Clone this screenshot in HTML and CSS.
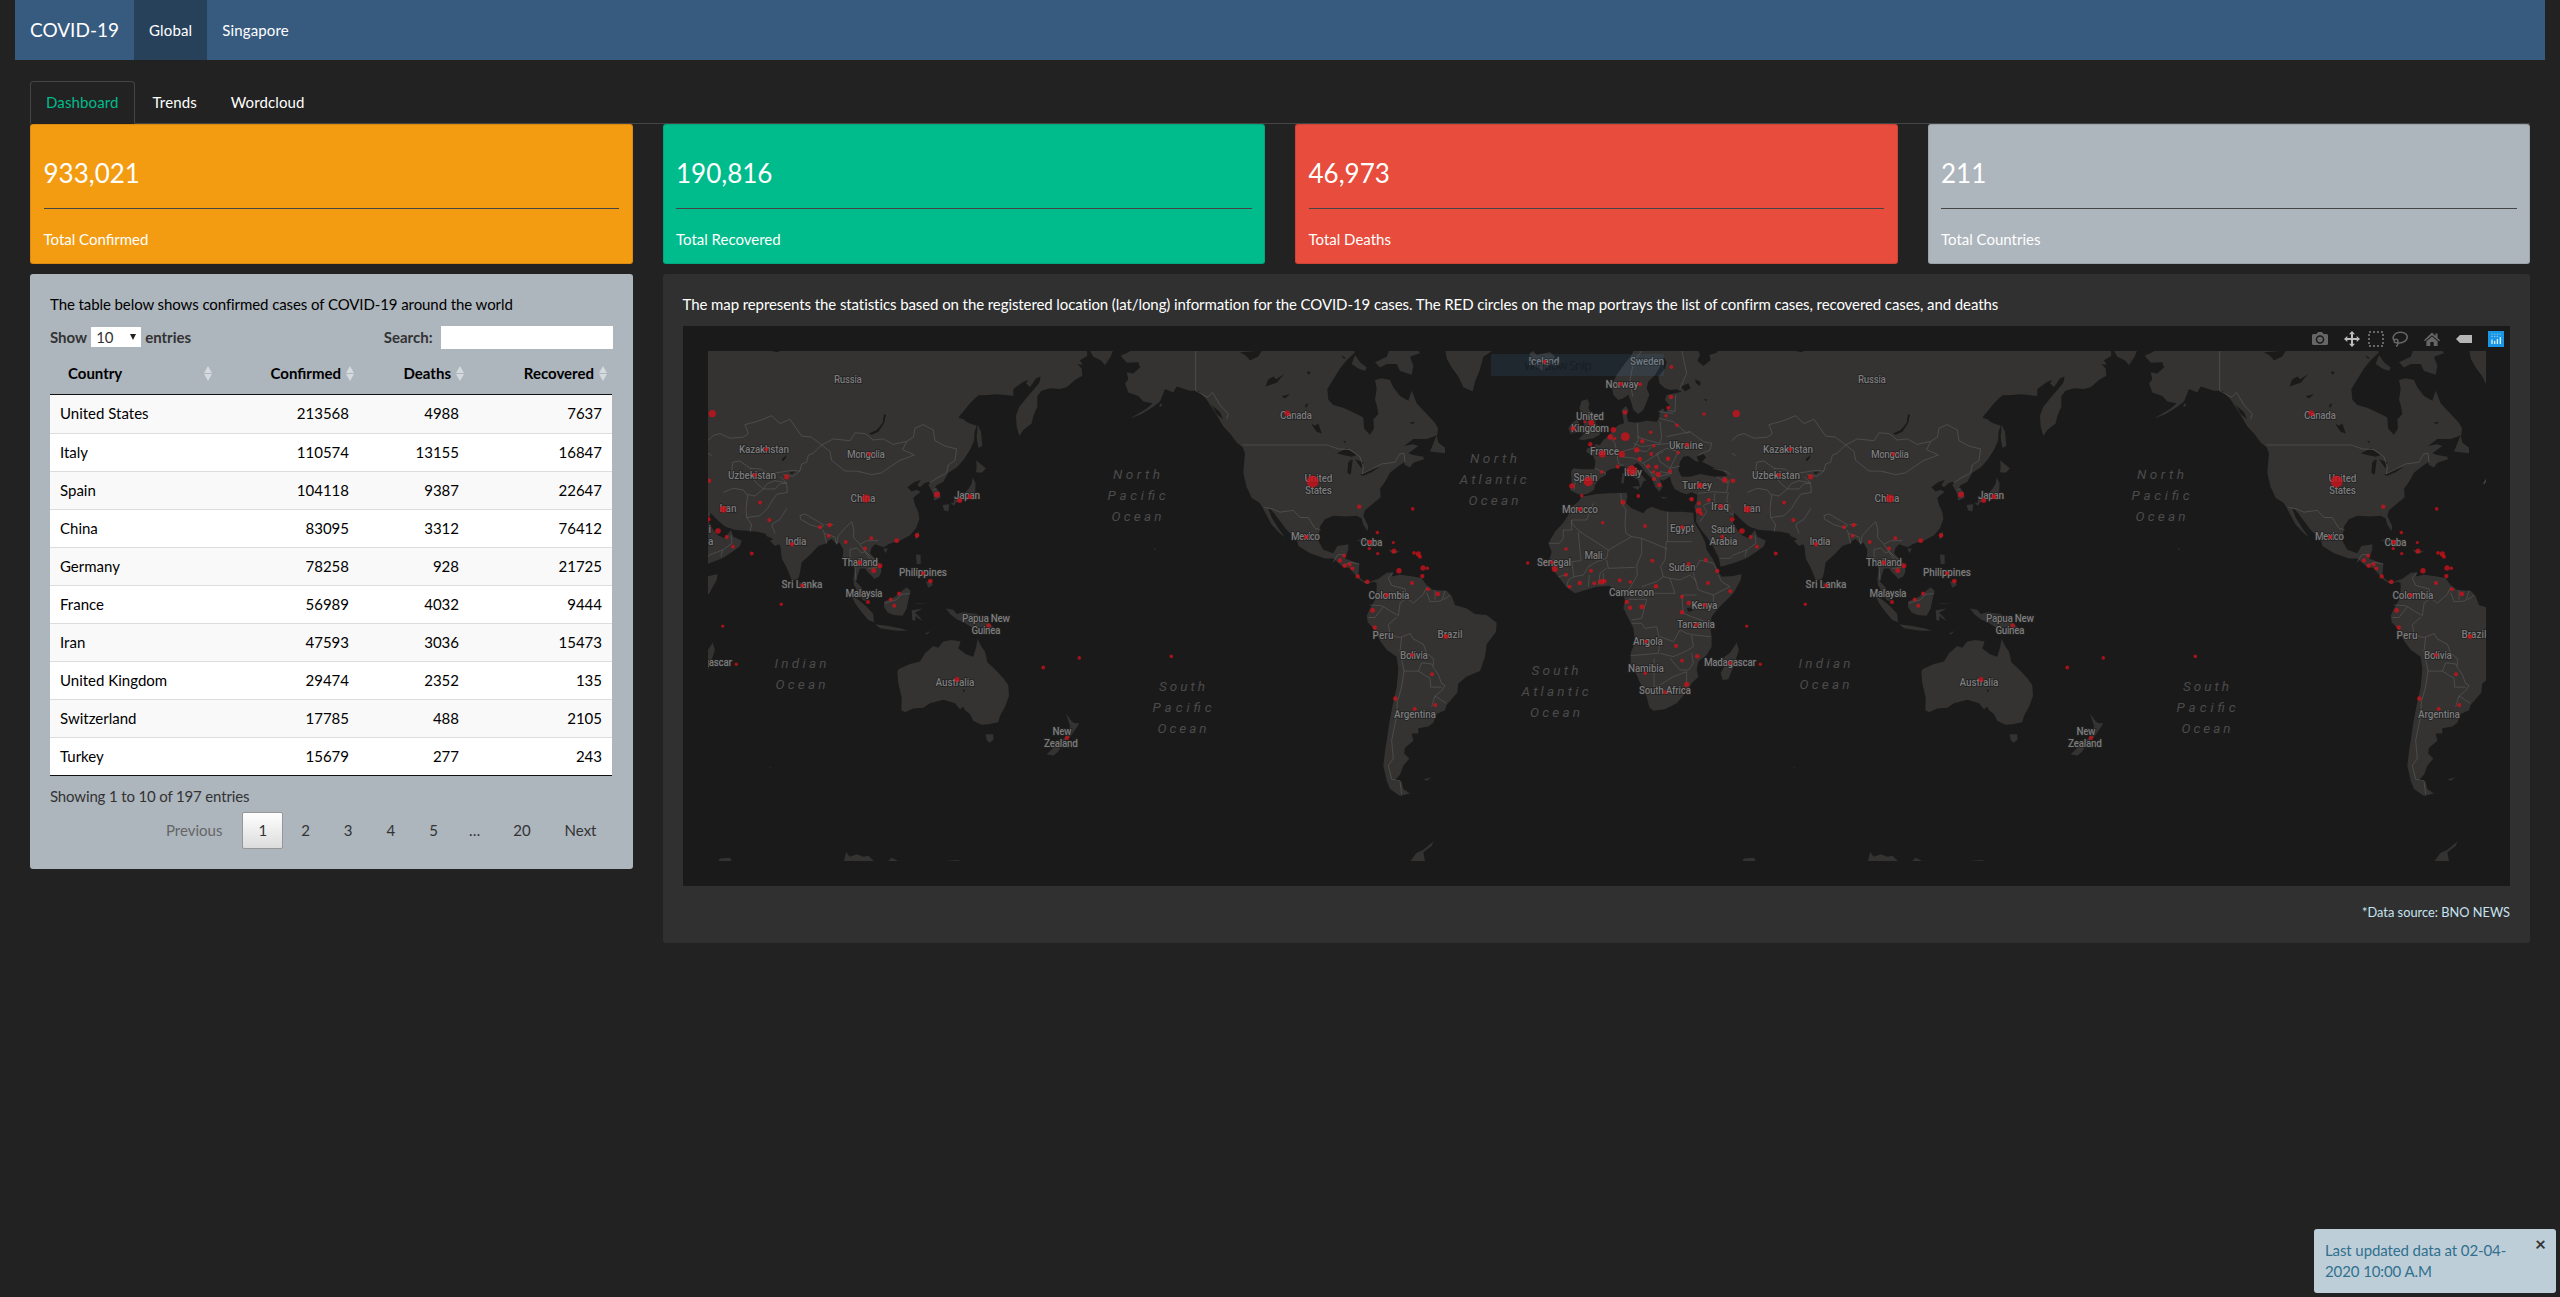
FILE: index.html
```html
<!DOCTYPE html>
<html lang="en">
<head>
<meta charset="utf-8">
<title>COVID-19</title>
<link rel="stylesheet" href="styles.css">
</head>
<body>
<nav class="navbar">
  <a class="brand">COVID-19</a>
  <a class="nav-link active">Global</a>
  <a class="nav-link">Singapore</a>
</nav>
<main class="container">
  <div class="tabs">
    <a class="tab active">Dashboard</a>
    <a class="tab">Trends</a>
    <a class="tab">Wordcloud</a>
  </div>
  <section class="stats">
    <div class="stat orange"><h3>933,021</h3><hr><p>Total Confirmed</p></div>
    <div class="stat green"><h3>190,816</h3><hr><p>Total Recovered</p></div>
    <div class="stat red"><h3>46,973</h3><hr><p>Total Deaths</p></div>
    <div class="stat grey"><h3>211</h3><hr><p>Total Countries</p></div>
  </section>
  <section class="panels">
    <div class="panel table-panel">
      <p class="intro">The table below shows confirmed cases of COVID-19 around the world</p>
      <div class="controls">
        <label class="length">Show <span class="select">10<i></i></span> entries</label>
        <label class="search">Search: <input type="text"></label>
      </div>
      <table class="cases">
        <colgroup><col class="c1"><col class="c2"><col class="c3"><col class="c4"></colgroup>
        <thead><tr><th class="name">Country<i class="sort"></i></th><th>Confirmed<i class="sort"></i></th><th>Deaths<i class="sort"></i></th><th>Recovered<i class="sort"></i></th></tr></thead>
        <tbody>
          <tr><td>United States</td><td>213568</td><td>4988</td><td>7637</td></tr>
          <tr><td>Italy</td><td>110574</td><td>13155</td><td>16847</td></tr>
          <tr><td>Spain</td><td>104118</td><td>9387</td><td>22647</td></tr>
          <tr><td>China</td><td>83095</td><td>3312</td><td>76412</td></tr>
          <tr><td>Germany</td><td>78258</td><td>928</td><td>21725</td></tr>
          <tr><td>France</td><td>56989</td><td>4032</td><td>9444</td></tr>
          <tr><td>Iran</td><td>47593</td><td>3036</td><td>15473</td></tr>
          <tr><td>United Kingdom</td><td>29474</td><td>2352</td><td>135</td></tr>
          <tr><td>Switzerland</td><td>17785</td><td>488</td><td>2105</td></tr>
          <tr><td>Turkey</td><td>15679</td><td>277</td><td>243</td></tr>
        </tbody>
      </table>
      <p class="info">Showing 1 to 10 of 197 entries</p>
      <div class="pager">
        <a class="page disabled">Previous</a>
        <a class="page current">1</a><a class="page">2</a><a class="page">3</a><a class="page">4</a><a class="page">5</a>
        <span class="ellipsis">…</span>
        <a class="page">20</a><a class="page">Next</a>
      </div>
    </div>
    <div class="panel map-panel">
      <p class="intro">The map represents the statistics based on the registered location (lat/long) information for the COVID-19 cases. The RED circles on the map portrays the list of confirm cases, recovered cases, and deaths</p>
      <div class="map">
        <svg class="canvas" width="1827" height="560" viewBox="683 326 1827 560">
          <defs>
            <clipPath id="view"><rect x="708" y="351" width="1778" height="510"/></clipPath>
            <g id="world">
              <g class="land">
                <g transform="translate(680 330) scale(.33333 .35714)">
                  <path d="M84 50H1220L1222 72 1200 85 1208 98 1192 95 1205 108 1207 128 1185 140 1160 160 1140 165 1110 163 1085 170 1072 185 1072 215 1060 240 1055 262 1030 280 1018 297 1010 270 1008 240 1018 215 1040 190 1060 168 1078 148 1082 130 1068 135 1050 160 1038 150 1045 140 1030 145 1000 165 1000 185 975 182 950 180 925 182 895 183 870 205 850 228 835 245 850 250 862 258 870 262 890 268 884 285 882 310 870 335 850 365 830 385 805 400 790 425 770 435 765 442 778 452 782 470 762 478 760 460 752 445 745 435 750 425 735 428 720 440 712 435 722 420 705 425 690 435 682 440 695 452 710 447 722 453 700 470 705 490 715 510 718 530 708 555 690 575 660 590 640 595 625 600 612 608 600 605 585 600 575 610 570 625 585 640 600 655 605 675 598 690 583 697 575 688 565 680 555 668 540 668 532 690 528 705 545 720 552 745 560 760 548 755 535 735 522 715 520 695 525 670 520 645 505 640 488 635 490 615 478 595 470 600 455 585 445 590 438 598 415 605 395 625 365 650 360 680 355 695 343 700 335 700 320 665 305 640 302 610 298 600 285 605 270 590 280 585 262 578 255 570 230 565 200 562 165 560 135 550 115 535 100 520 88 510 80 505V50Z"/>
                  <path d="M893 265L903 285 907 325 895 330 890 300ZM888 365L918 388 905 400 888 398 890 380ZM878 412L887 430 885 455 870 470 845 478 820 485 822 475 845 465 865 445 875 430ZM788 490L808 488 805 508 792 505ZM812 485L828 483 822 492ZM715 565L718 575 708 588 705 575ZM610 612L624 612 616 625ZM708 628L722 630 722 655 710 655ZM738 705L755 700 758 715 745 722ZM612 760L640 750 660 735 680 720 692 730 685 755 680 780 668 800 640 798 622 790 612 775ZM515 745L535 755 560 775 580 795 582 818 565 812 545 790 525 765ZM585 824L620 828 660 835 685 842 650 842 600 835ZM695 785L728 780 705 792 715 800 728 815 715 808 708 800 705 815 697 812ZM735 850L752 843 740 853ZM798 780L820 783 830 795 850 790 890 795 920 815 950 840 965 850 935 845 915 832 880 835 850 818 830 810 810 795ZM358 705L368 712 365 722 357 718ZM710 766L745 765 710 768ZM1422 612L1427 612 1425 618ZM268 1224L275 1226 270 1228Z"/>
                  <path d="M652 960L655 950 690 935 720 928 735 905 760 885 775 890 790 872 815 868 842 872 835 892 858 908 880 915 888 890 893 865 903 885 915 900 922 930 945 950 970 975 985 995 987 1025 975 1055 960 1080 955 1098 925 1104 905 1105 880 1095 870 1075 855 1065 850 1055 840 1062 825 1045 790 1035 750 1045 730 1058 700 1060 675 1070 664 1065 665 1030 655 990ZM917 1132L940 1132 940 1148 928 1156 920 1148ZM1158 1073L1170 1090 1180 1100 1198 1102 1185 1120 1170 1140 1155 1150 1135 1180 1120 1192 1100 1188 1120 1170 1145 1150 1165 1130 1170 1110Z"/>
                  <path d="M115 1487L120 1480 150 1478 155 1487ZM492 1487L498 1462 510 1475 530 1468 550 1475 565 1472 582 1487ZM624 1487L635 1478 655 1487ZM790 1487L838 1484V1487Z"/>
                  <path d="M1228 55H1300L1292 75 1275 98 1262 85 1240 75ZM1322 72L1345 62 1370 50H1565V170L1530 170 1490 158 1480 175 1455 165 1440 200 1420 215 1385 235 1350 248 1400 220 1418 205 1390 200 1375 185 1345 175 1335 150 1345 138 1340 118 1360 122 1380 105 1375 90 1340 92ZM1440 205L1448 210 1438 217Z"/>
                </g>
                <g transform="translate(1200 330) scale(.33333 .35714)">
                  <path d="M-12 50H450L465 62 440 85 420 108 405 130 382 165 385 195 400 210 430 218 470 235 490 245 492 275 510 293 522 275 520 250 535 235 530 210 525 195 530 165 525 140 545 135 570 140 580 160 600 185 625 198 635 170 650 205 675 230 705 260 714 275 712 295 680 305 640 305 612 325 640 320 655 325 625 345 640 350 670 355 672 362 640 372 630 385 615 378 612 370 590 385 570 400 555 425 540 445 542 468 520 485 495 505 490 520 505 550 502 563 490 545 485 528 470 520 440 522 400 520 375 530 360 550 355 590 370 615 400 625 412 605 445 600 445 615 435 640 465 650 478 655 475 690 490 702 510 705 530 698 535 710 520 705 500 712 480 700 465 685 450 668 425 660 400 640 375 640 330 625 295 605 290 585 260 560 240 535 215 505 205 500 215 525 235 555 255 580 240 570 215 545 195 510 180 485 155 470 140 440 130 400 135 345 128 328 110 315 90 290 70 270 45 230 20 195 -5 170 -12 170Z"/>
                  <path d="M690 340L710 295 715 315 735 330 735 345ZM525 90L560 75 570 50 650 50 660 65 630 75 640 100 635 125 600 115 590 95 560 95 540 105ZM455 95L465 70 480 90 500 105 495 115 475 108ZM735 50H890L850 75 840 110 825 145 818 172 790 160 775 130 755 105 740 80ZM470 588L500 585 550 605 520 603ZM565 615L600 620 580 628Z"/>
                  <path d="M530 700L560 680 580 678 575 690 600 685 640 690 665 695 680 715 700 728 740 730 755 745 765 770 800 780 825 795 860 798 890 820 888 845 860 880 855 915 840 955 800 970 775 990 772 1015 740 1050 735 1065 710 1075 700 1100 685 1110 655 1115 655 1130 635 1130 640 1150 615 1170 612 1185 628 1200 610 1220 600 1245 585 1260 605 1265 610 1285 630 1298 600 1305 570 1285 560 1262 550 1220 555 1180 560 1150 568 1100 578 1050 590 1000 595 950 590 915 560 895 540 870 520 835 503 818 500 800 510 780 525 755 530 725ZM672 1258L695 1252 680 1262ZM632 1487L648 1465 670 1455 700 1432 695 1445 670 1462 675 1487Z"/>
                </g>
                <g transform="translate(1500 330) scale(.33333)">
                  <path d="M497 50H590L600 75 592 92 610 108 632 90 628 75 650 68 665 50H702V560L690 560 600 575 588 550 583 530 590 515 592 495 575 487 560 493 545 488 525 478 515 460 510 440 490 452 480 448 488 470 478 485 465 470 455 445 435 425 420 405 412 398 400 405 402 412 412 425 430 440 440 452 432 452 425 465 422 475 415 450 395 438 380 420 372 408 360 410 345 415 330 418 318 425 318 435 300 445 285 465 282 480 262 492 243 495 225 488 210 480 215 455 213 425 220 415 250 418 283 417 286 395 280 378 258 365 262 355 283 352 285 342 300 345 310 330 325 318 340 300 355 285 372 280 368 255 365 240 378 228 385 240 380 258 385 275 410 278 440 272 470 275 478 262 480 240 490 235 495 245 510 240 508 225 495 210 500 195 525 190 545 185 530 178 510 180 495 175 478 160 475 140 495 115 500 95 490 80Z"/>
                  <path d="M405 50L395 75 375 100 350 135 335 165 340 195 355 210 370 205 385 195 393 215 400 240 415 252 430 240 440 215 448 195 440 175 445 155 465 135 480 110 490 85 500 50ZM245 212L262 208 268 220 265 235 275 250 285 270 290 285 305 295 298 315 280 325 250 330 235 328 252 312 240 305 250 290 255 270 245 255 238 235ZM215 280L232 268 240 285 235 305 212 312 205 295ZM88 70L100 63 110 75 150 66 165 80 155 100 128 122 100 105ZM367 430L374 430 372 460 364 460ZM395 470L420 468 415 480ZM482 500L505 503 490 506ZM565 505L580 500 574 512Z"/>
                  <path d="M245 500L290 492 330 490 380 488 382 500 378 520 395 535 430 550 440 538 455 530 480 540 505 545 545 545 580 548 582 575 600 605 615 635 620 660 640 690 655 725 665 740 700 738 725 732 722 750 700 790 670 820 650 840 635 860 630 885 635 920 635 950 620 975 595 995 590 1020 595 1040 575 1060 560 1085 530 1120 495 1138 460 1142 448 1132 440 1100 425 1070 410 1035 392 1000 392 970 405 935 400 895 385 865 370 835 375 812 370 795 345 785 330 768 290 770 225 790 200 772 175 740 155 715 148 690 155 665 145 640 165 605 190 578 205 555 215 530 235 515ZM710 938L717 960 700 1010 685 1048 668 1050 662 1030 672 1010 668 985 690 968Z"/>
                  <path d="M590 545L640 545 690 560 700 580 712 600 725 615 745 625 765 600 772 620 798 632 790 650 765 668 740 685 700 700 662 710 655 680 640 650 620 620 600 595 588 575Z"/>
                </g>
              </g>
              <g class="water">
                <path transform="translate(680 330) scale(.33333 .35714)" d="M567 290L590 280 608 260 612 235 618 238 612 262 595 285 575 293ZM305 362L320 350 318 358 308 368ZM328 398L345 396 335 404ZM275 59L300 59 292 62ZM848 1005L856 1010 850 1014Z"/>
                <path transform="translate(1200 330) scale(.33333 .35714)" d="M410 345L440 332 470 350 455 355 430 350ZM445 370L455 362 458 365 452 405 442 400ZM465 362L490 370 485 388 475 375ZM480 405L515 390 540 382 515 398 490 408ZM120 62L185 58 175 74 150 85 138 72ZM196 158L205 138 220 130 228 138 252 124 230 148ZM245 185L270 180 255 192ZM333 262L345 268 355 262 365 290 350 285ZM315 210L325 205 318 220ZM320 115L332 118 326 126ZM628 260L645 256 638 264ZM430 310L438 312 436 318ZM35 210L58 228 70 250 50 235ZM425 70L438 80 430 80Z"/>
                <path transform="translate(1500 330) scale(.33333)" d="M700 392L720 375 757 376 757 388 735 392 724 402 735 420 748 428 744 445 756 460 752 488 728 490 712 478 714 455 698 425 692 405ZM540 395L550 380 565 378 585 392 597 397 590 380 610 372 618 382 606 395 640 412 670 422 682 438 645 440 600 432 570 440 545 440 535 420ZM543 170L565 160 572 175 555 184ZM585 148L602 155 600 168 588 160ZM612 208L622 208 618 214ZM560 835L575 832 578 842 565 845ZM592 545L600 550 606 562 594 552Z"/>
              </g>
              <g class="borders">
                <path transform="translate(680 330) scale(.33333 .35714)" d="M84 310L100 295 120 290 150 303 190 300 205 290 195 265 235 255 275 240 300 262 330 250 365 297 395 300 425 322 400 345 385 350 380 370 365 375 360 395 340 410 310 405M425 322L460 305 510 310 525 288 555 290 580 308 610 305 640 320 680 312 668 335 703 350 660 365 635 380 605 400 575 405 530 395 495 395 455 365 450 340 425 322M680 312L700 300 705 275 730 265 760 280 765 310 795 325 830 333 825 365 805 378 800 400 770 415 750 428M760 447L772 445M155 405L158 370 180 367 210 387 245 390 260 400 290 400 335 393 360 395M210 387L225 425 250 445 262 430 285 422 320 428 300 410M130 455L160 443 190 448 200 460 225 465 250 445 285 445 300 430 320 430 322 455 290 460 275 480 262 500 240 520 200 525 198 500 203 462M200 525L215 545 210 565M320 500L300 530 275 545 285 570M360 520L375 515 430 545 425 555 390 545 362 530ZM435 545L460 545M430 560L440 598M435 570L465 580 470 600 475 575 500 550 515 537 522 560 520 580 540 600 560 590 595 590M510 615L530 610 545 625 555 620 575 650 590 655 590 665 565 668M510 615L510 635 525 665 528 700M540 600L550 615 590 650M615 765L650 755 665 740 690 738M84 345L95 352"/>
                <path transform="translate(1200 330) scale(.33333 .35714)" d="M-13 50V170L22 188 38 175 60 210 85 235 80 250M128 322H382L415 333 450 335 480 355 490 385 487 403 515 390 545 375 585 370 598 348 612 345 615 370M193 497L215 500 240 510 280 505 300 525 325 525 345 555 362 560M400 650L412 630 432 628M430 660L450 650 478 655M578 680L565 695 575 715 615 725 620 750 600 765 595 800M620 750L640 765 670 740 680 720M680 735L690 760 715 760 740 750 750 742M705 728V755M735 730L728 752M510 770L545 772 595 800M505 805L525 805 550 775M590 805L565 825 570 850 590 860 605 860 630 850 640 865 670 880 680 905 700 920 700 940M605 860L600 900 608 935 612 955 655 955 665 932 695 935 700 945 715 965 725 990 735 995 725 1010 705 1025 738 1045M655 955L690 975 692 1000 725 1000M705 1025L695 1055M612 955L605 1000 592 1040 590 1080 575 1150 580 1200 565 1220 575 1258 600 1262 605 1300"/>
                <path transform="translate(1500 330) scale(.33333)" d="M362 490L365 520 378 540 375 580 378 610 395 620 425 625 498 655M503 545V635H575M498 660V635H503M395 620L325 660 240 605 215 580V570H260L280 520M215 570V600H190V625L178 640H148M240 605L235 610 243 692 215 695M325 660L320 685 290 695 265 710 250 735 222 740 215 695 155 690M425 625L425 670 410 705 412 735 395 765 385 780M320 690L325 715 405 712M498 655L495 690 482 710 490 740 470 755 425 770M490 740L510 745 540 750 570 735 590 755M600 690L640 700 655 725M600 690L580 730 595 780 640 795 690 770 665 755 655 735M640 795V840M545 795H590M545 795L550 850 575 860 630 880M510 745L525 790H455L425 800M385 808H440L425 865 395 870M395 880H425L435 895 470 890 480 935 475 970 392 977M480 920L520 935 540 900 560 910 585 915 632 920M480 970L520 980 555 965 580 950 575 915M462 985V1070L480 1065 520 1040 560 1025V1060M510 985L540 1020 565 1020 580 1000 575 970M175 740L200 735M200 772L205 750 222 740M265 770L268 735M295 765L300 730 320 715M310 730V765M595 490L640 485 680 488 685 460 665 450 650 440M645 488L642 515 610 525M642 515L665 535 700 555M600 575L620 545 610 528M685 488L680 510 700 548M660 685L690 685 700 675 740 660 768 640 765 615M740 660L735 680"/>
                <path transform="translate(1500 330) scale(.33333)" d="M330 320L345 340 350 365 355 400 372 408M285 415L318 430M228 440L222 480M412 278L415 330 400 355 365 365M412 320L440 330 480 340 485 320 480 275M400 340L425 350 460 345 510 340 530 360M478 265L520 275 560 310 570 305 610 335 635 340 630 360 595 375M500 320L570 305M475 245L520 250M500 240L525 245 527 195M545 60L560 130 540 175M398 200L390 150 400 100 425 62M480 395L510 415 540 408M510 415L535 365 500 355 470 370 480 395M365 380L405 385 430 400 460 380 490 365M430 400L450 425 475 440 515 430 480 425M405 360L440 365 455 350M640 415L680 425 700 440 680 460M670 440L690 460M450 425L470 455"/>
              </g>
            </g>
          </defs>
          <g clip-path="url(#view)">
            <use href="#world" x="-1024"/><use href="#world"/><use href="#world" x="1024"/>
            <g id="labels"></g>
            <rect class="snip" x="1491" y="354" width="173" height="22"/>
            <text class="snip-text" x="1524" y="369.500" textLength="68">Window Snip</text>
            <g id="cases"></g>
          </g>
        </svg>
        <div class="modebar">
          <svg class="tool camera" viewBox="0 0 16 16"><path fill-rule="evenodd" d="M1.500 3H4.500L6 1H10L11.500 3H14.500Q16 3 16 4.500V12.500Q16 14 14.500 14H1.500Q0 14 0 12.500V4.500Q0 3 1.500 3ZM8 4.200A4.300 4.300 0 1 0 8 12.800 4.300 4.300 0 1 0 8 4.200ZM8 5.700A2.800 2.800 0 1 1 8 11.300 2.800 2.800 0 1 1 8 5.700Z"/></svg>
          <svg class="tool pan" viewBox="0 0 16 16"><path d="M8 0L11 3.300H9V7H12.700V5L16 8 12.700 11V9H9V12.700H11L8 16 5 12.700H7V9H3.300V11L0 8 3.300 5V7H7V3.300H5Z"/></svg>
          <svg class="tool box" viewBox="0 0 16 16"><rect x="1" y="1" width="14" height="14" fill="none" stroke="currentColor" stroke-width="2" stroke-dasharray="2 2"/></svg>
          <svg class="tool lasso" viewBox="0 0 16 16"><path fill="none" stroke="currentColor" stroke-width="1.500" d="M3 10C-1 7 2 1.500 8.500 1.200 14 1 16.500 5 14.500 8.500 12.500 11.500 8 12.500 4.800 11.500M4.500 8.200A2 1.800 0 1 0 4.600 11.700 2 1.800 0 0 0 4.500 8.200M5.500 11.500Q6.500 14 4 15.500"/></svg>
          <svg class="tool home" viewBox="0 0 16 16"><path d="M8 1.500L11.500 5V2.500H13.500V7L16 9.200 15 10.300 8 4.200 1 10.300 0 9.200ZM8 5.500L13.600 10.300V15H9.700V11H6.300V15H2.400V10.300Z"/></svg>
          <svg class="tool tag" viewBox="0 0 16 16"><path d="M0 8L4 4H16V12H4Z"/></svg>
          <svg class="tool logo" viewBox="0 0 16 16"><rect width="16" height="16" fill="#1b96e5"/><path stroke="#d9f1ff" stroke-width="1.300" d="M4 8.500V13M6.700 10V13M9.400 8V13M12.300 6V13"/><path stroke="#8dd0f7" stroke-dasharray="1.200 1.500" d="M3.400 3.200H13M3.400 5.500H11"/></svg>
        </div>
      </div>
      <p class="source">*Data source: BNO NEWS</p>
    </div>
  </section>
</main>
<aside class="toast"><span>Last updated data at 02-04-2020 10:00 A.M</span><b>×</b></aside>
<script src="map.js"></script>
</body>
</html>
```
FILE: styles.css
```css
* { box-sizing: border-box; }
body { margin: 0; background: #222; color: #fff; font: 15px/1.42857 Lato, sans-serif; min-height: 1297px; overflow: hidden; }
p, h3 { margin: 0; font-weight: 400; }
.navbar { display: flex; height: 60px; margin: 0 15px; background: #375a7f; line-height: 60px; }
.brand { padding: 0 15px; font-size: 19px; }
.nav-link { padding: 0 15px; letter-spacing: .15px; }
.nav-link.active { background: #28415b; }
.container { padding: 21px 30px 0; }
.tabs { display: flex; gap: 2px; height: 43px; border-bottom: 1px solid #464545; letter-spacing: .12px; }
.tab { height: 43px; padding: 10px 15px; border: 1px solid transparent; border-radius: 4px 4px 0 0; }
.tab.active { color: #00bc8c; border-color: #464545; border-bottom-color: #222; }
.stats { display: grid; grid-template-columns: repeat(4, 1fr); gap: 30px; }
.stat { height: 140px; padding: 0 12.5px; border-radius: 3px; border: 1px solid rgba(0,0,0,.1); }
.stat h3 { padding-top: 33px; font-size: 26px; line-height: 30px; }
.stat hr { height: 1px; margin: 20px 0 20px; border: 0; background: #464545; }
.orange { background: #f39c12; }
.green { background: #00bc8c; }
.red { background: #e74c3c; }
.grey { background: #adb5bd; }
.panels { display: grid; grid-template-columns: 602.5px 1fr; gap: 30px; align-items: start; margin-top: 10px; }
.panel { padding: 19px 20px; border-radius: 3px; }
.table-panel { height: 595px; background: #adb5bd; color: #000; }
.intro { height: 33px; line-height: 22px; letter-spacing: -.085px; white-space: nowrap; }
.controls { display: flex; justify-content: space-between; align-items: center; height: 23px; color: #333; font-weight: 700; }
.length { display: flex; align-items: center; gap: 4px; }
.select { display: flex; align-items: center; justify-content: space-between; width: 50px; height: 20px; padding: 0 5px; background: #fff; font-weight: 400; }
.select i { border: 3px solid transparent; border-top: 6px solid #222; border-bottom: 0; }
.search { display: flex; align-items: center; gap: 8px; }
.search input { width: 172px; height: 23px; border: 0; padding: 0; background: #fff; }
.cases { width: 562px; margin-top: 5px; table-layout: fixed; border-collapse: separate; border-spacing: 0; border-bottom: 1px solid #111; }
.c1 { width: 169px; } .c2 { width: 140px; } .c3 { width: 110px; } .c4 { width: 143px; }
.cases th { position: relative; height: 41px; padding: 0 18px 1px; border-bottom: 1px solid #111; text-align: right; font-weight: 700; }
.cases th.name { text-align: left; }
.sort { position: absolute; right: 5px; top: 12px; width: 8px; height: 15px; background: linear-gradient(#adb5bd,#adb5bd) 0 7px/8px 1px no-repeat, #d5dade; clip-path: polygon(50% 0, 100% 46%, 100% 54%, 50% 100%, 0 54%, 0 46%); }
.name .sort { right: 7px; }
.cases td { height: 38px; padding: 0 10px; border-top: 1px solid #ddd; background: #fff; text-align: right; }
.cases tr:first-child td { border-top: 0; }
.cases tr:nth-child(odd) td { background: #f9f9f9; }
.cases td:first-child { text-align: left; }
.info { margin-top: 10px; line-height: 21px; color: #333; letter-spacing: -.15px; }
.pager { display: flex; justify-content: flex-end; gap: 2px; margin-top: 5px; color: #333; }
.page { height: 37px; padding: 7px 15px; border: 1px solid transparent; border-radius: 2px; }
.disabled { color: #666; padding-right: 17px; }
.current { border-color: #979797; background: linear-gradient(#fff, #dcdcdc); }
.ellipsis { padding: 8px 15px 8px 13px; }
.map-panel { height: 669px; background: #303030; }
.map { position: relative; height: 560px; background: #1a1a1a; }
.canvas { display: block; }
.source { padding-top: 15px; font-size: 12.8px; line-height: 22px; text-align: right; color: #c7e4f0; }
.land { fill: #343332; }
.water { fill: #1a1a1a; }
.borders { fill: none; stroke: #666; stroke-width: 1.8; stroke-linejoin: round; }
.borders path { opacity: .8; }
.country { font: 500 10px Roboto, sans-serif; fill: #7c7c7c; stroke: #222; stroke-width: 1.5px; paint-order: stroke; }
.ocean { font: italic 400 13.5px Roboto, sans-serif; fill: #4b4b4b; }
.case { fill: #d5101a; opacity: .75; }
.snip { fill: #4682b4; opacity: .14; }
.snip-text { font: 12.5px "Open Sans", sans-serif; fill: #151b20; opacity: .75; }
.modebar { position: absolute; top: 5px; right: 6px; display: flex; color: #666; }
.tool { width: 16px; height: 16px; margin-left: 8px; fill: currentColor; }
.pan { margin-left: 16px; color: #bdbdbd; }
.home { margin-left: 16px; }
.tag { margin-left: 16px; color: #b5b5b5; }
.logo { margin-left: 16px; }
.toast { position: absolute; right: 4px; bottom: 4px; display: flex; justify-content: space-between; width: 242px; height: 64px; padding: 11px 10px 0 11px; border-radius: 3px; background: #bdced8; color: #31708f; line-height: 21px; letter-spacing: -.1px; }
.toast span { width: 190px; }
.toast b { font-size: 19px; line-height: 8px; color: #333; }
```
FILE: map.js
```js
// One world copy is 1024px wide; features repeat across the view.
const COPIES = [-1024, 0, 1024];
const NS = 'http://www.w3.org/2000/svg';

// text, centre x, baseline y, width
const countries = [
  ['Russia', 848, 383, 28], ['Kazakhstan', 764, 453, 50], ['Mongolia', 866, 458, 38], ['Uzbekistan', 752, 479, 48],
  ['China', 863, 501.5, 25], ['Iran', 728, 511.5, 17], ['Japan', 967, 498.5, 26], ['India', 796, 545, 21],
  ['Thailand', 860, 566, 36], ['Philippines', 923, 576, 48], ['Sri Lanka', 802, 588, 41], ['Malaysia', 864, 597, 37],
  ['Papua New', 986, 622, 48], ['Guinea', 986, 634, 29], ['Australia', 955, 685.5, 39], ['New', 1062, 735, 19], ['Zealand', 1061, 747, 34],
  ['Canada', 1296, 418.5, 32], ['United', 1318.5, 481.5, 28], ['States', 1318.5, 493.5, 27], ['Mexico', 1305.5, 539.5, 29],
  ['Cuba', 1371.5, 546, 22], ['Colombia', 1389, 598.5, 41], ['Peru', 1383, 639, 21], ['Brazil', 1450, 637.5, 25],
  ['Bolivia', 1414, 658.5, 28], ['Argentina', 1415, 717.5, 42], ['Iceland', 1544, 364.5, 31], ['Sweden', 1647, 364.5, 34],
  ['Norway', 1622, 388, 33], ['United', 1590, 419.5, 28], ['Kingdom', 1590, 431.5, 38], ['France', 1604.5, 454.5, 29],
  ['Ukraine', 1686, 448.5, 34], ['Italy', 1633, 476, 18], ['Spain', 1585.5, 480.5, 24], ['Turkey', 1697, 489, 30],
  ['Morocco', 1580, 512.5, 36], ['Iraq', 1720, 510, 18], ['Egypt', 1682, 531.5, 24], ['Saudi', 1723, 533, 24],
  ['Arabia', 1723.5, 545, 28], ['Mali', 1593.5, 559, 18], ['Senegal', 1554, 565.5, 34], ['Sudan', 1682, 570.5, 27],
  ['Cameroon', 1631.5, 596, 45], ['Kenya', 1704.5, 608.5, 26], ['Tanzania', 1696, 627.5, 38], ['Angola', 1648, 644.5, 30],
  ['Madagascar', 1730, 666, 52], ['Namibia', 1646, 671.5, 36], ['South Africa', 1665, 694, 52]
];
const oceans = [
  ['Indian', 800.5, 668, 52], ['Ocean', 800.5, 689, 50],
  ['North', 1136.5, 479, 47], ['Pacific', 1136.5, 500, 58], ['Ocean', 1136.5, 521, 50],
  ['South', 1182, 691, 46], ['Pacific', 1182, 712, 59], ['Ocean', 1182, 733, 49],
  ['North', 1493.5, 463, 47], ['Atlantic', 1493, 484, 67], ['Ocean', 1493.5, 505, 50],
  ['South', 1555, 675, 47], ['Atlantic', 1555, 696, 67], ['Ocean', 1555, 717, 50]
];

// origin and unit of each survey sheet, then x, y, radius
const sheets = [
  [680, 330, 1 / 3, 1 / 2.8, [
    [259,334,2],[568,347,2],[224,406,2],[320,411,2.6],[558,472,4],[130,502,3.5],[240,483,2],[268,532,2],[771,461,3],
    [839,477,2.5],[870,467,2.5],[336,600,2.3],[420,552,2],[449,546,2.2],[446,576,2],[497,594,2],[574,583,2],[555,612,2],
    [650,590,2.4],[711,575,2.3],[540,651,2.2],[600,660,2.5],[581,673,2.5],[729,681,2],[751,703,2.4],[657,738,2],[632,755,2],
    [564,762,2],[643,772,2],[367,715,2],[215,626,2],[304,768,1.7],[128,829,1.7],[169,936,1.7],[926,827,2.2],[831,979,2.5],
    [1090,945,1.9],[1198,918,1.8],[1474,914,1.8],[1161,1142,2.2]]],
  [1200, 330, 1 / 3, 1 / 2.8, [
    [262,233,2.8],[338,424,6],[478,495,2.2],[318,580,2.2],[638,501,1.8],[532,567,1.8],[510,594,2.3],[508,612,1.7],[533,626,1.7],
    [580,595,1.6],[582,619,2.5],[642,624,1.8],[655,627,2.6],[660,635,2],[669,666,2.6],[682,667,1.8],[667,689,2.2],[597,674,2.7],
    [420,645,2.2],[433,632,2],[434,660,2.3],[449,656,2],[457,668,2],[473,690,2.2],[502,705,2.3],[636,708,2],[684,726,2],
    [713,739,2.4],[560,742,2.2],[518,785,2.4],[524,833,2.2],[738,858,2.5],[636,910,2],[696,964,2],[586,1032,2.3],[706,1050,2],[644,1061,2]]],
  [1500, 330, 1 / 3, 1 / 3, [
    [134,95,2],[514,111,2],[362,162,2.3],[420,163,2],[513,201,2.2],[505,233,2],[498,257,1.8],[375,247,2.4],[274,278,3],[254,275,1.5],
    [219,296,2.4],[271,343,2.2],[307,372,3.6],[376,320,4.4],[340,299,2.8],[331,321,2.8],[344,326,1.7],[452,307,1.8],[531,286,1.8],
    [612,252,1.8],[709,251,3.6],[365,373,3.2],[410,360,2.8],[427,334,2.2],[461,347,1.8],[454,372,1.9],[504,386,2.2],[535,368,1.8],
    [561,344,2.2],[419,387,2.2],[445,409,2],[469,411,2.2],[461,425,1.8],[475,433,2.6],[462,447,2],[478,465,2.2],[510,424,2],
    [395,421,4.8],[265,455,4.6],[216,468,2.8],[305,426,1.8],[353,410,2],[245,497,1.8],[415,498,1.9],[575,508,2.3],[600,466,2.8],
    [674,450,2.7],[699,452,2.3],[626,510,2],[597,520,2],[596,542,3],[603,552,2],[662,529,2.4],[697,568,2.4],[726,603,2.8],[752,621,2],
    [771,650,1.9],[667,620,2],[369,517,2.5],[240,538,2.2],[308,578,1.8],[435,588,1.9],[546,591,2],[198,657,1.8],[83,699,1.8],
    [155,697,1.8],[164,717,3],[198,734,2],[209,770,1.9],[239,759,2.2],[273,722,2],[283,760,2],[303,755,2.8],[313,754,2.3],
    [359,751,2],[391,756,1.8],[457,692,2],[566,702,2],[617,690,2],[652,723,2.2],[624,759,2],[691,784,2],[468,769,2.2],
    [380,816,2.2],[390,833,2.2],[426,830,2.5],[546,800,2],[566,819,2.2],[546,847,2.2],[614,825,2],[589,884,2],[438,934,1.9],
    [528,948,2.1],[546,992,1.9],[592,979,2.3],[436,1030,1.8],[560,1063,2.6],[495,1087,2],[690,999,1.9]]]
];

function add(parent, tag, attrs, text) {
  const el = document.createElementNS(NS, tag);
  for (const k in attrs) el.setAttribute(k, attrs[k]);
  if (text) el.textContent = text;
  parent.appendChild(el);
}
const labels = document.getElementById('labels');
const cases = document.getElementById('cases');
for (const dx of COPIES) {
  for (const [list, cls] of [[oceans, 'ocean'], [countries, 'country']]) {
    for (const [text, x, y, w] of list) {
      const left = x + dx - w / 2;
      if (left + w > 708 && left < 2486) add(labels, 'text', { class: cls, x: left, y, textLength: w }, text);
    }
  }
  for (const [ox, oy, sx, sy, dots] of sheets) {
    for (const [x, y, r] of dots) {
      const cx = ox + x * sx + dx;
      if (cx > 706 && cx < 2486) add(cases, 'circle', { class: 'case', cx: cx.toFixed(1), cy: (oy + y * sy).toFixed(1), r });
    }
  }
}
```
